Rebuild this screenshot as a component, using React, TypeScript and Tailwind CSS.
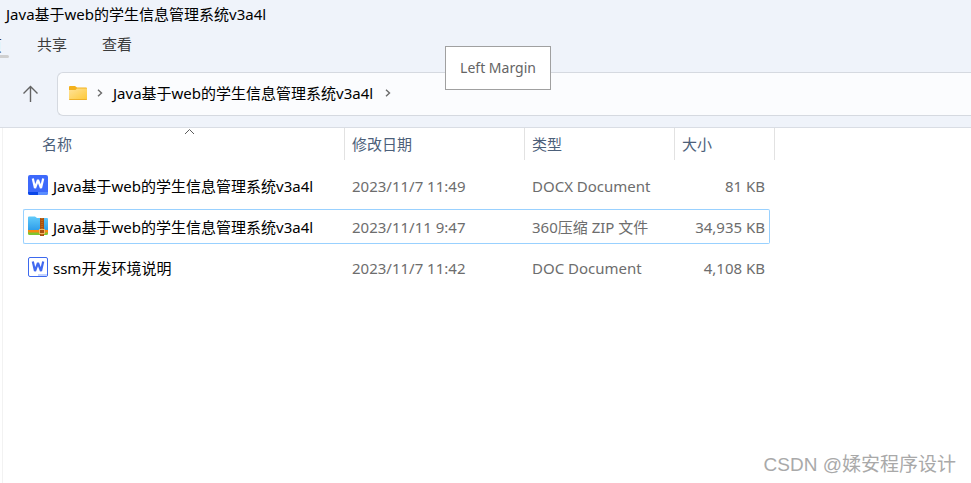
import React from "react";

type Kind = "docx" | "zip" | "doc";

interface FileRow {
  name: string;
  kind: Kind;
  modified: string;
  type: string;
  size: string;
  focused?: boolean;
}

const FOLDER = "Java基于web的学生信息管理系统v3a4l";

const files: FileRow[] = [
  { name: FOLDER, kind: "docx", modified: "2023/11/7 11:49", type: "DOCX Document", size: "81 KB" },
  { name: FOLDER, kind: "zip", modified: "2023/11/11 9:47", type: "360压缩 ZIP 文件", size: "34,935 KB", focused: true },
  { name: "ssm开发环境说明", kind: "doc", modified: "2023/11/7 11:42", type: "DOC Document", size: "4,108 KB" },
];

function DocxIcon() {
  return (
    <svg width="20" height="20" viewBox="0 0 20 20" aria-hidden="true">
      <rect width="20" height="20" rx="2" fill="#3d69fb" />
      <path d="M0 17h10v3H2a2 2 0 0 1-2-2z" fill="#0b47e8" />
      <path d="M10 17h10v1a2 2 0 0 1-2 2h-8z" fill="#5a8dff" />
      <path d="M4.800 3.500 7 13 10 5 13 13 15.200 3.500" fill="none" stroke="#fff" strokeWidth="2.200" strokeLinejoin="bevel" />
    </svg>
  );
}

function DocIcon() {
  return (
    <svg width="20" height="20" viewBox="0 0 20 20" aria-hidden="true">
      <rect x="0.5" y="0.5" width="19" height="19" rx="1.5" fill="#fff" stroke="#3d69ee" />
      <path d="M10 17h9v2h-9z" fill="#c3d3ff" />
      <path d="M4.800 4.500 7 14 10 6 13 14 15.200 4.500" fill="none" stroke="#4068f0" strokeWidth="2.200" strokeLinejoin="bevel" />
    </svg>
  );
}

function ZipIcon() {
  return (
    <svg width="20" height="20" viewBox="0 0 20 20" aria-hidden="true">
      <defs>
        <linearGradient id="zipBlue" x1="0" y1="0" x2="0" y2="1">
          <stop offset="0" stopColor="#62cbfa" />
          <stop offset="1" stopColor="#2f9eea" />
        </linearGradient>
      </defs>
      <path d="M0 15h20v2.500a1.500 1.500 0 0 1-1.500 1.500h-17A1.500 1.500 0 0 1 0 17.500z" fill="#7fc62f" />
      <path d="M0 13h20v3.500H1.500A1.500 1.500 0 0 1 0 15z" fill="#f58a12" />
      <path d="M0 1.500Q0 .500 1 .500h6l2 1.500h10q1 0 1 1V14H0z" fill="url(#zipBlue)" />
      <path d="M12 2h4v18h-4z" fill="#a8500f" />
      <path d="M14 2v18" stroke="#d9821d" strokeDasharray="1 1" />
      <rect x="11.500" y="13.500" width="5" height="4" fill="#a8500f" stroke="#f3b765" />
    </svg>
  );
}

function FileIcon({ kind }: { kind: Kind }) {
  if (kind === "docx") return <DocxIcon />;
  if (kind === "zip") return <ZipIcon />;
  return <DocIcon />;
}

function Chevron() {
  return (
    <svg width="6" height="8" viewBox="0 0 6 8" aria-hidden="true">
      <path d="M1 .8 4.500 4 1 7.200" fill="none" stroke="#6a6a6a" strokeWidth="1.400" />
    </svg>
  );
}

function FolderIcon() {
  return (
    <svg width="18" height="14" viewBox="0 0 18 14" aria-hidden="true">
      <defs>
        <linearGradient id="folderFace" x1="0" y1="0" x2="1" y2="1">
          <stop offset="0" stopColor="#ffe39a" />
          <stop offset="1" stopColor="#fdc835" />
        </linearGradient>
      </defs>
      <path d="M0 1q0-1 1-1h5l2 1.500h9q1 0 1 1V6H0z" fill="#f3b11c" />
      <path d="M0 4h6.500L8 2.500h10V13q0 1-1 1H1q-1 0-1-1z" fill="url(#folderFace)" />
      <path d="M0 13h18q0 1-1 1H1q-1 0-1-1z" fill="#eeb02a" />
    </svg>
  );
}

const cell = "flex h-[35px] items-center border-y";

export default function App() {
  return (
    <div className="relative flex min-h-screen flex-col overflow-hidden bg-white font-['Noto_Sans','Noto_Sans_CJK_SC',sans-serif] text-[15px] leading-5 text-black">
      <header className="border-b border-[#d9dde4] bg-[#eff3fa] pb-[11px]">
        <h1 className="px-1.5 pt-1 pb-1.5">{FOLDER}</h1>
        <nav className="-ml-7 flex h-7 items-start gap-[35px] pt-1 text-[#3b3b3b]">
          <button className="h-6 w-[30px] text-left leading-5">
            主页
            <span className="block h-[3px] w-[37px] rounded-full bg-[#cfcfcf]" />
          </button>
          <button className="w-[30px] leading-5">共享</button>
          <button className="w-[30px] leading-5">查看</button>
        </nav>
        <div className="mt-3.5 flex items-center pl-[22px]">
          <button aria-label="Up" className="w-[35px]">
            <svg width="17" height="18" viewBox="0 0 17 18" aria-hidden="true">
              <path d="M8.500 17V1.500M1.500 8.500l7-7 7 7" fill="none" stroke="#636363" strokeWidth="1.400" />
            </svg>
          </button>
          <div className="flex h-11 flex-1 items-center gap-2.5 rounded-l-md border border-r-0 border-[#d5d9e0] bg-[#fbfcfe] pb-0.5 pl-[11px]">
            <FolderIcon />
            <Chevron />
            <button className="pr-0.5 leading-5">{FOLDER}</button>
            <Chevron />
          </div>
        </div>
      </header>

      <main className="ml-0.5 flex-1 border-l border-[#f2f2f2] pl-5">
        <table className="w-[752px] table-fixed border-separate border-spacing-0">
          <thead>
            <tr className="text-left text-[#4c607a]">
              <th className="w-[322px] p-0 pb-[5px] font-normal">
                <div className="relative flex h-8 items-center border-r border-[#e2e2e2] pl-[19px]">
                  名称
                  <svg className="absolute top-0 left-[161px]" width="11" height="7" viewBox="0 0 11 7" aria-hidden="true">
                    <path d="M1 6l4.500-4.500L10 6" fill="none" stroke="#5c5c5c" />
                  </svg>
                </div>
              </th>
              <th className="w-[180px] p-0 pb-[5px] font-normal">
                <div className="flex h-8 items-center border-r border-[#e2e2e2] pl-[7px]">修改日期</div>
              </th>
              <th className="w-[150px] p-0 pb-[5px] font-normal">
                <div className="flex h-8 items-center border-r border-[#e2e2e2] pl-[7px]">类型</div>
              </th>
              <th className="w-[100px] p-0 pb-[5px] font-normal">
                <div className="flex h-8 items-center border-r border-[#e2e2e2] pl-[7px]">大小</div>
              </th>
            </tr>
          </thead>
          <tbody>
            {files.map((f) => {
              const edge = f.focused ? "border-[#99d1ff]" : "border-transparent";
              return (
                <tr key={f.type} className="whitespace-nowrap text-[#6d6d6d]">
                  <td className="p-0 py-[3px]">
                    <div className={`${cell} ${edge} gap-[5px] rounded-l-xs border-l pl-1 text-black`}>
                      <span className="pb-0.5"><FileIcon kind={f.kind} /></span>
                      {f.name}
                    </div>
                  </td>
                  <td className="p-0 py-[3px]">
                    <div className={`${cell} ${edge} pl-[7px]`}>{f.modified}</div>
                  </td>
                  <td className="p-0 py-[3px]">
                    <div className={`${cell} ${edge} pl-[7px]`}>{f.type}</div>
                  </td>
                  <td className="p-0 py-[3px] pr-[5px]">
                    <div className={`${cell} ${edge} justify-end rounded-r-xs border-r pr-1`}>{f.size}</div>
                  </td>
                </tr>
              );
            })}
          </tbody>
        </table>
      </main>

      <div role="tooltip" className="absolute top-[46px] left-[445px] flex h-11 w-[106px] items-center justify-center border border-[#a0a0a0] bg-white text-sm text-[#646464]">
        Left Margin
      </div>
      <p className="absolute right-[15px] bottom-1.5 font-['Liberation_Sans','Noto_Sans_CJK_SC',sans-serif] text-[19px] leading-6 text-[#a9a9a9]">
        CSDN @媃安程序设计
      </p>
    </div>
  );
}
